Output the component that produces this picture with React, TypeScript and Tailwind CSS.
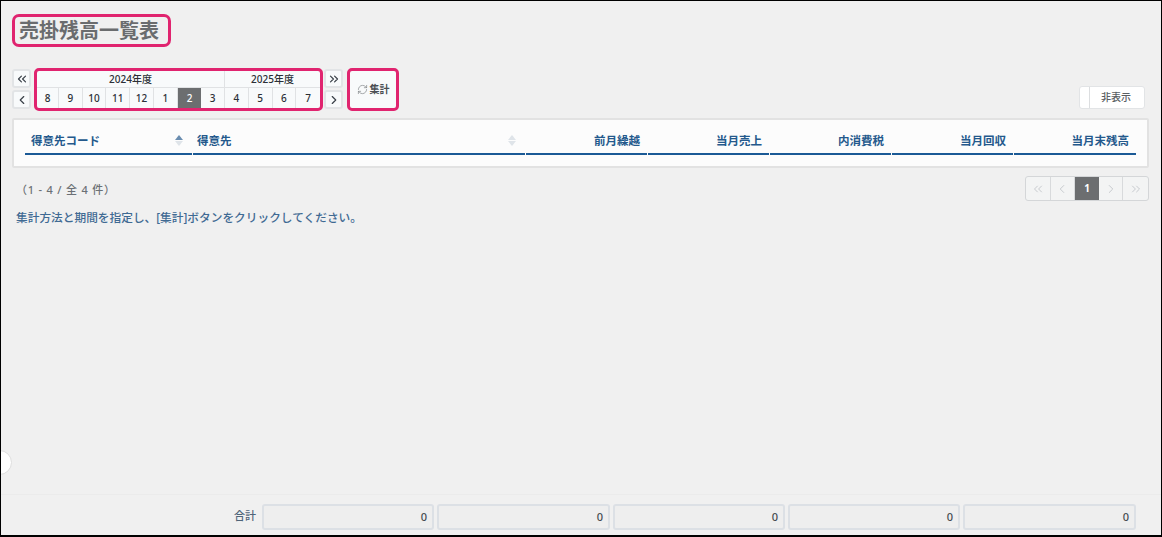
// App.tsx
// 売掛残高一覧表 screen

import React from 'react';
import { ChevronLeft, ChevronRight, ChevronsLeft, ChevronsRight, RefreshCw } from 'lucide-react';

const months = ['8', '9', '10', '11', '12', '1', '2', '3', '4', '5', '6', '7'];

const amountColumns = [
  { label: '前月繰越', width: 'w-[121px]' },
  { label: '当月売上', width: 'w-[121px]' },
  { label: '内消費税', width: 'w-[121px]' },
  { label: '当月回収', width: 'w-[121px]' },
  { label: '当月末残高', width: 'w-[122px]' },
];

const totalWidths = ['w-[172px]', 'w-[173px]', 'w-[172px]', 'w-[172px]', 'w-[173px]'];

function SideButton({ children }: { children: React.ReactNode }) {
  return (
    <button className="flex h-[19px] w-[19px] items-center justify-center rounded-[3px] border-2 border-[#e2e4e6] bg-[#f8fafb] text-[#3a4048]">
      {children}
    </button>
  );
}

function SortArrows({ active = false }: { active?: boolean }) {
  return (
    <span className="flex flex-col gap-[1px]">
      <span
        className={`h-0 w-0 border-x-[4px] border-b-[5px] border-x-transparent ${active ? 'border-b-[#6a8db0]' : 'border-b-[#dfe4e9]'}`}
      />
      <span className="h-0 w-0 border-x-[4px] border-t-[5px] border-x-transparent border-t-[#dfe4e9]" />
    </span>
  );
}

function PageButton({ children }: { children: React.ReactNode }) {
  return (
    <span className="flex h-full w-[25px] items-center justify-center border-r border-[#d8dadc] text-[#c0c4c8] last:border-r-0">
      {children}
    </span>
  );
}

export default function App() {
  return (
    <div
      className="relative flex h-[537px] w-[1162px] flex-col overflow-hidden border-x border-t border-b-2 border-black bg-[#f0f0f0] text-[#3b4046]"
      style={{ fontFamily: '"Noto Sans", "Noto Sans CJK JP", sans-serif' }}
    >
      {/* Title */}
      <div className="ml-[11px] mt-[13px] flex h-[33px] w-[159px] items-center rounded-[7px] border-[3px] border-[#e0246f] pl-[4px]">
        <h1 className="text-[20px] leading-none font-bold whitespace-nowrap text-[#6a6c6e]">売掛残高一覧表</h1>
      </div>

      {/* Period selector */}
      <div className="ml-[11px] mt-[21px] flex h-[43px] items-start">
        <div className="mt-[1px] flex flex-col gap-[2px]">
          <SideButton><ChevronsLeft size={14} strokeWidth={2} /></SideButton>
          <SideButton><ChevronLeft size={14} strokeWidth={2} /></SideButton>
        </div>

        <div className="ml-[3px] h-[43px] w-[289px] rounded-[5px] border-[3px] border-[#e0246f] bg-[#f8fafb] text-[10px] text-[#2b3036]">
          <div className="flex h-[17px] border-b border-[#e0e2e4] font-medium">
            <div className="flex w-[188px] items-center justify-center border-r border-[#e0e2e4] pt-[1px]">2024年度</div>
            <div className="flex flex-1 items-center justify-center pt-[1px]">2025年度</div>
          </div>
          <div className="grid h-[20px] grid-cols-[22px_repeat(11,1fr)]">
            {months.map((m) => (
              <div
                key={m}
                className={
                  m === '2'
                    ? 'flex items-center justify-center bg-[#6c6e70] pt-[1px] font-medium text-white'
                    : 'flex items-center justify-center border-r border-[#e0e2e4] pt-[1px] font-medium last:border-r-0'
                }
              >
                {m}
              </div>
            ))}
          </div>
        </div>

        <div className="ml-[1px] mt-[1px] flex flex-col gap-[2px]">
          <SideButton><ChevronsRight size={14} strokeWidth={2} /></SideButton>
          <SideButton><ChevronRight size={14} strokeWidth={2} /></SideButton>
        </div>

        <button className="ml-[4px] flex h-[43px] w-[52px] items-center justify-center gap-[2px] rounded-[5px] border-[3px] border-[#e0246f] bg-[#f8fafb] text-[10px] font-bold text-[#4a4e53]">
          <RefreshCw size={11} strokeWidth={1.5} className="text-[#808488]" />
          集計
        </button>

        <button className="ml-[680px] mt-[18px] flex h-[23px] w-[66px] rounded-[3px] border border-[#e2e4e6] bg-white text-[10px] text-[#5a5e63]">
          <span className="w-[10px] border-r border-[#dcdee0]" />
          <span className="flex flex-1 items-center justify-center pr-[2px] font-medium">非表示</span>
        </button>
      </div>

      {/* Table header */}
      <div className="ml-[11px] mt-[7px] h-[50px] w-[1137px] rounded-[2px] border-2 border-[#e2e2e2] bg-[#fcfcfc] pl-[11px]">
        <div className="mt-[9px] flex h-[26px] w-[1111px] gap-px text-[11.5px] leading-none font-bold text-[#24598c]">
          <div className="flex w-[167px] items-center justify-between border-b-2 border-[#1b5a96] pb-[1px] pl-[6px] pr-[9px]">
            得意先コード
            <SortArrows active />
          </div>
          <div className="flex w-[332px] items-center justify-between border-b-2 border-[#1b5a96] pb-[1px] pl-[4px] pr-[9px]">
            得意先
            <SortArrows />
          </div>
          {amountColumns.map((col) => (
            <div
              key={col.label}
              className={`flex ${col.width} items-center justify-end border-b-2 border-[#1b5a96] pb-[1px] pr-[7px]`}
            >
              {col.label}
            </div>
          ))}
        </div>
      </div>

      {/* Count and pagination */}
      <div className="ml-[15px] mt-[8px] flex w-[1133px] items-start justify-between">
        <span className="mt-[7px] text-[11px] leading-[14px] font-medium tracking-[0.8px] text-[#6c7075]">
          （1 - 4 / 全 4 件）
        </span>
        <div className="flex h-[25px] w-[124px] overflow-hidden rounded-[3px] border border-[#d4d6d8] bg-[#f3f4f4]">
          <PageButton><ChevronsLeft size={14} strokeWidth={1.5} /></PageButton>
          <PageButton><ChevronLeft size={14} strokeWidth={1.5} /></PageButton>
          <span className="flex h-full w-[24px] items-center justify-center bg-[#6c6e70] text-[10px] font-bold text-white">1</span>
          <PageButton><ChevronRight size={14} strokeWidth={1.5} /></PageButton>
          <PageButton><ChevronsRight size={14} strokeWidth={1.5} /></PageButton>
        </div>
      </div>

      <p className="ml-[15px] mt-[9px] text-[11.7px] leading-[14px] font-medium whitespace-nowrap text-[#3f6a93]">
        集計方法と期間を指定し、[集計]ボタンをクリックしてください。
      </p>

      {/* Totals */}
      <div className="mt-auto flex h-[41px] items-start justify-end gap-[3px] border-t border-[#ebebeb] pr-[25px] pt-[9px]">
        <span className="mr-[3px] mt-[5px] text-[11px] leading-[14px] font-medium text-[#4f6478]">合計</span>
        {totalWidths.map((w, i) => (
          <div
            key={i}
            className={`flex h-[26px] ${w} items-center justify-end rounded-[3px] border-2 border-[#dce0e5] bg-[#eeeeee] pr-[5px] text-[11px] font-medium text-[#444a50]`}
          >
            0
          </div>
        ))}
      </div>

      {/* Collapsed side handle */}
      <div className="absolute left-[-14px] top-[449px] h-[25px] w-[25px] rounded-full border border-[#dedede] bg-white" />
    </div>
  );
}
